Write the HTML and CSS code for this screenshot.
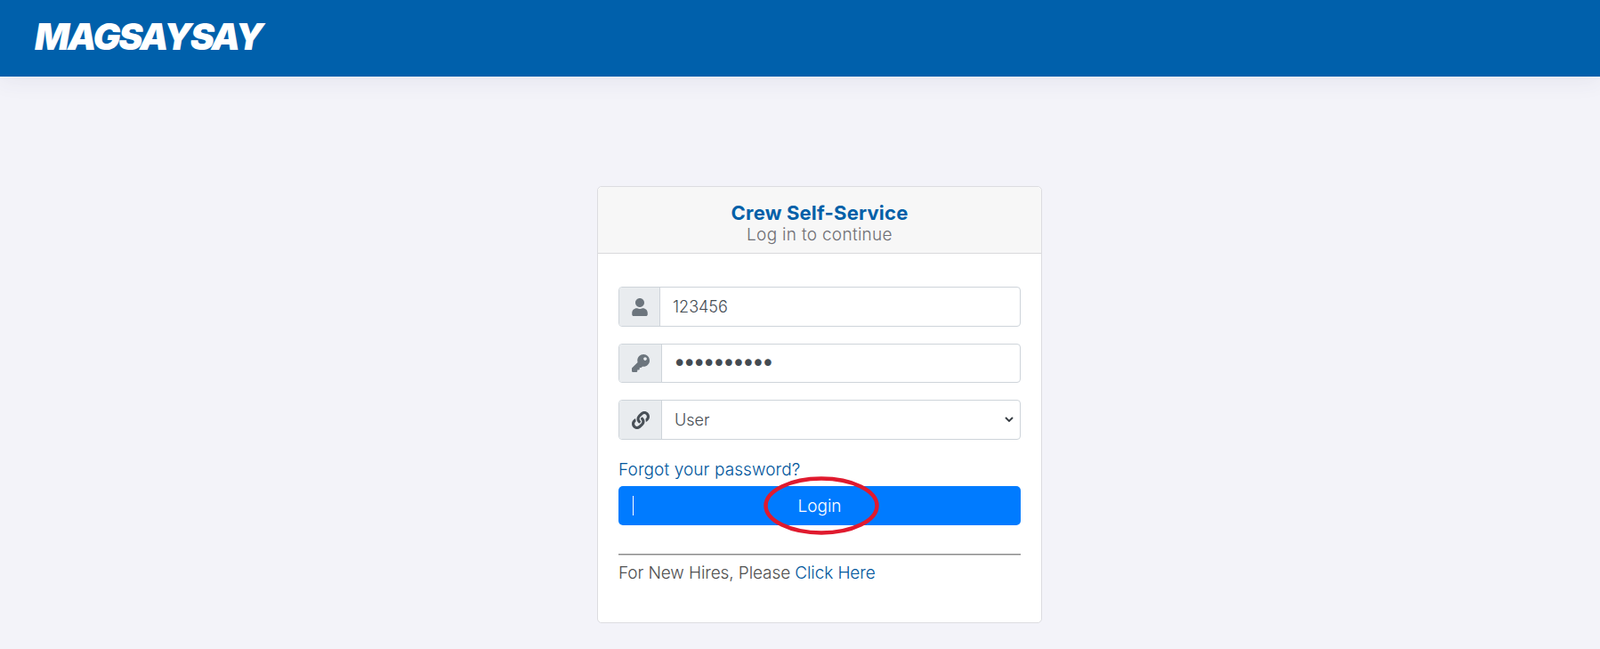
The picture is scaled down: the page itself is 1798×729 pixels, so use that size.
FILE: index.html
```html
<!DOCTYPE html>
<html lang="en">
<head>
    <meta charset="UTF-8">
    <meta name="viewport" content="width=device-width, initial-scale=1.0">
    <title>Crew Self-Service</title>
    <link rel="stylesheet" href="styles.css">
</head>
<body>
    <header class="top-bar">
        <span class="logo">MAGSAYSAY</span>
    </header>

    <main class="login-page">
        <div class="login-card">
            <div class="card-header">
                <h1 class="card-title">Crew Self-Service</h1>
                <p class="card-subtitle">Log in to continue</p>
            </div>
            <form class="card-body">
                <div class="input-group">
                    <span class="addon addon-user">
                        <svg class="icon icon-user" viewBox="0 0 448 512"><path d="M224 256c70.7 0 128-57.3 128-128S294.7 0 224 0 96 57.3 96 128s57.3 128 128 128zm89.6 32h-16.7c-22.2 10.2-46.9 16-72.9 16s-50.6-5.8-72.9-16h-16.7C60.2 288 0 348.2 0 422.4V464c0 26.5 21.5 48 48 48h352c26.5 0 48-21.5 48-48v-41.6c0-74.2-60.2-134.4-134.4-134.4z"/></svg>
                    </span>
                    <input class="field" type="text" value="123456">
                </div>
                <div class="input-group group-short">
                    <span class="addon">
                        <svg class="icon" viewBox="0 0 512 512"><path d="M512 176.001C512 273.203 433.202 352 336 352c-11.22 0-22.19-1.062-32.827-3.069l-24.012 27.014A23.999 23.999 0 0 1 261.223 384H224v40c0 13.255-10.745 24-24 24h-40v40c0 13.255-10.745 24-24 24H24c-13.255 0-24-10.745-24-24v-78.059c0-6.365 2.529-12.47 7.029-16.971l161.802-161.802C163.108 213.814 160 195.271 160 176 160 78.798 238.797.001 335.999 0 433.488-.001 512 78.511 512 176.001zM336 128c0 26.51 21.49 48 48 48s48-21.49 48-48-21.49-48-48-48-48 21.49-48 48z"/></svg>
                    </span>
                    <input class="field field-password" type="password" value="1234567890">
                </div>
                <div class="input-group">
                    <span class="addon">
                        <svg class="icon icon-link" viewBox="0 0 512 512"><path d="M326.612 185.391c59.747 59.809 58.927 155.698.36 214.59-.11.12-.24.25-.36.37l-67.2 67.2c-59.27 59.27-155.699 59.262-214.96 0-59.27-59.26-59.27-155.7 0-214.96l37.106-37.106c9.84-9.84 26.786-3.3 27.294 10.606.648 17.722 3.826 35.527 9.69 52.721 1.986 5.822.567 12.262-3.783 16.612l-13.087 13.087c-28.026 28.026-28.905 73.66-1.155 101.96 28.024 28.579 74.086 28.749 102.325.51l67.2-67.19c28.191-28.191 28.073-73.757 0-101.83-3.701-3.694-7.429-6.564-10.341-8.569a16.037 16.037 0 0 1-6.947-12.606c-.396-10.567 3.348-21.456 11.698-29.806l21.054-21.055c5.521-5.521 14.182-6.199 20.584-1.731a152.482 152.482 0 0 1 20.522 17.197zM467.547 44.449c-59.261-59.262-155.69-59.27-214.96 0l-67.2 67.2c-.12.12-.25.25-.36.37-58.566 58.892-59.387 154.781.36 214.59a152.454 152.454 0 0 0 20.521 17.196c6.402 4.468 15.064 3.789 20.584-1.731l21.054-21.055c8.35-8.35 12.094-19.239 11.698-29.806a16.037 16.037 0 0 0-6.947-12.606c-2.912-2.005-6.64-4.875-10.341-8.569-28.073-28.073-28.191-73.639 0-101.83l67.2-67.19c28.239-28.239 74.3-28.069 102.325.51 27.75 28.3 26.872 73.934-1.155 101.96l-13.087 13.087c-4.35 4.35-5.769 10.79-3.783 16.612 5.864 17.194 9.042 34.999 9.69 52.721.509 13.906 17.454 20.446 27.294 10.606l37.106-37.106c59.271-59.259 59.271-155.699.001-214.959z"/></svg>
                    </span>
                    <select class="field field-select">
                        <option>User</option>
                    </select>
                </div>
                <a class="link forgot-link" href="#">Forgot your password?</a>
                <button class="login-btn" type="button">
                    <span class="btn-cursor"></span>
                    Login
                    <svg class="circle-mark" viewBox="0 0 130 66"><ellipse cx="65" cy="33" rx="62.5" ry="30.5"/></svg>
                </button>
                <hr class="divider">
                <p class="new-hires">For New Hires, Please <a class="link" href="#">Click Here</a></p>
            </form>
        </div>
    </main>
</body>
</html>
```

FILE: styles.css
```css
/* Estilos generales */
* {
    box-sizing: border-box;
}
body {
    margin: 0;
    height: 729px;
    overflow: hidden;
    background-color: #f3f3f9;
    font-family: Inter, Lato, sans-serif;
    font-size: 19px;
    font-weight: 300;
    color: #444b52;
}

/* Barra superior */
.top-bar {
    display: flex;
    align-items: center;
    height: 86px;
    padding-left: 39px;
    background-color: #0060ab;
    box-shadow: 0 4px 24px rgba(60, 60, 100, 0.08);
}
.logo {
    font-family: Inter, "Liberation Sans", sans-serif;
    font-size: 41px;
    font-weight: 900;
    font-style: italic;
    letter-spacing: -2.2px;
    color: #fff;
    margin-top: -4px;
}

/* Tarjeta de login */
.login-page {
    padding: 123px 0 0 671px;
}
.login-card {
    width: 500px;
    height: 491px;
    background-color: #fff;
    border: 1px solid #dcdce0;
    border-radius: 5px;
}
.card-header {
    height: 75px;
    padding-top: 15px;
    text-align: center;
    background-color: #f7f7f7;
    border-bottom: 1px solid #d9d9dc;
    border-radius: 5px 5px 0 0;
}
.card-title {
    margin: 0;
    font-size: 22px;
    font-weight: 700;
    letter-spacing: 0.2px;
    line-height: 29px;
    color: #0060a8;
}
.card-subtitle {
    margin: 0;
    font-size: 19px;
    letter-spacing: 0.3px;
    line-height: 20px;
    color: #6e6e73;
}
.card-body {
    padding: 37px 23px 0;
}

/* Campos */
.input-group {
    display: flex;
    height: 45px;
    margin-bottom: 19px;
    border: 1px solid #ced4da;
    border-radius: 4px;
    background-color: #fff;
}
.group-short {
    height: 44px;
}
.addon {
    display: flex;
    justify-content: center;
    align-items: center;
    flex: none;
    width: 48px;
    background-color: #e9ecef;
    border-right: 1px solid #ced4da;
    border-radius: 3px 0 0 3px;
}
.addon-user {
    width: 46px;
}
.icon {
    width: 20px;
    height: 20px;
    fill: #6c757d;
}
.icon-link {
    fill: #495057;
}
.field {
    flex: 1;
    min-width: 0;
    padding: 0 14px;
    border: none;
    outline: none;
    background: transparent;
    border-radius: 0 3px 3px 0;
    font-family: inherit;
    font-size: 18px;
    font-weight: 300;
    color: #444b52;
}
.field-password {
    padding-left: 12px;
    font-family: "DejaVu Sans", sans-serif;
    font-size: 26px;
    font-weight: 400;
    letter-spacing: -4.3px;
}
.field-select {
    appearance: none;
    padding: 0 14px;
    background: url("data:image/svg+xml,%3Csvg xmlns='http://www.w3.org/2000/svg' viewBox='0 0 10 7'%3E%3Cpath d='M1 1l4 4 4-4' fill='none' stroke='%23343a40' stroke-width='1.8'/%3E%3C/svg%3E") no-repeat right 7px center / 10px 7px;
}

/* Enlaces y botón */
.link {
    color: #00569c;
    text-decoration: none;
}
.forgot-link {
    display: block;
    padding-top: 2px;
    line-height: 26px;
    letter-spacing: 0.1px;
}
.login-btn {
    position: relative;
    display: block;
    width: 100%;
    height: 44px;
    margin-top: 5px;
    padding: 0;
    border: none;
    border-radius: 5px;
    background-color: #007bff;
    font-family: inherit;
    font-size: 19px;
    font-weight: 300;
    color: #fff;
}
.btn-cursor {
    position: absolute;
    left: 16px;
    top: 11px;
    width: 1px;
    height: 22px;
    background-color: #fff;
}
.circle-mark {
    position: absolute;
    left: 163px;
    top: -11px;
    width: 130px;
    height: 66px;
    fill: none;
    stroke: #e01a2e;
    stroke-width: 4.5;
}
.divider {
    margin: 32px 0 0;
    border: none;
    border-top: 1px solid #8a8a8a;
    border-bottom: 1px solid #c8c8c8;
}
.new-hires {
    margin: 7px 0 0;
    letter-spacing: -0.1px;
    line-height: 26px;
    color: #4f4f4f;
}
```
